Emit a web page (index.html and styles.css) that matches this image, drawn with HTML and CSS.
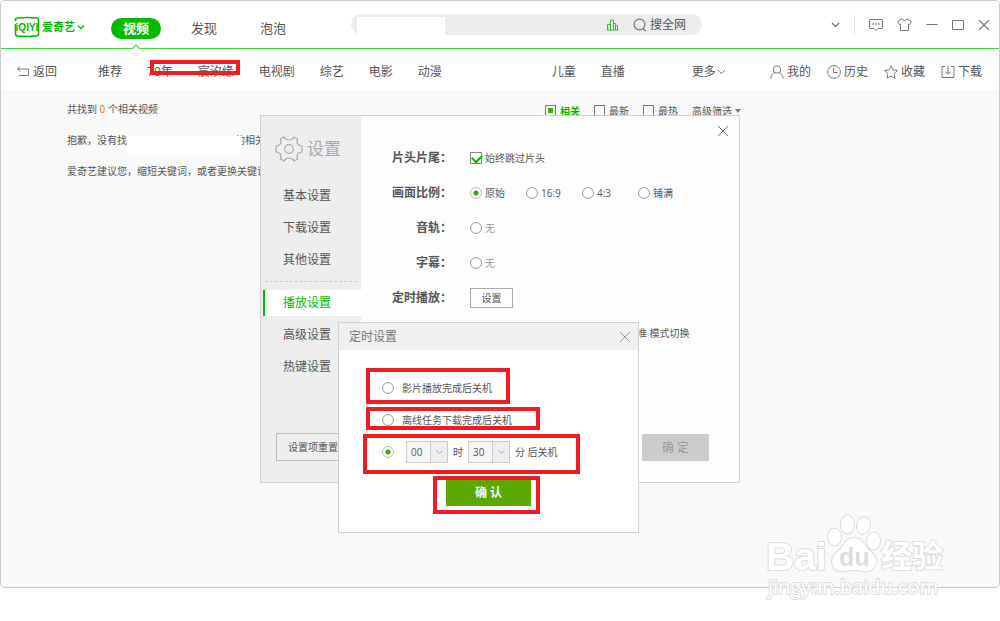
FILE: index.html
```
<!DOCTYPE html>
<html lang="zh-CN">
<head>
    <meta charset="UTF-8">
    <meta name="viewport" content="width=device-width, initial-scale=1.0">
    <title>爱奇艺</title>
    <link rel="stylesheet" href="styles.css">
</head>
<body>
    <div class="window">
        <header class="topbar">
            <a class="logo" href="#">
                <svg width="26" height="22" viewBox="0 0 26 22">
                    <path d="M1.500 5V4Q1.500 2.200 3.500 2Q13 1 22.500 2Q24.500 2.200 24.500 4V18Q24.500 19.800 22.500 20Q13 21 3.500 20Q1.500 19.800 1.500 18V8" fill="none" stroke="#0b0" stroke-width="1.600"/>
                    <text x="13" y="15" text-anchor="middle" class="logo-mark">iQIYI</text>
                </svg>
                <span>爱奇艺</span>
                <svg width="8" height="6" viewBox="0 0 8 6"><path d="M1 1.500L4 4.500L7 1.500" fill="none" stroke="#0b0" stroke-width="1.300"/></svg>
            </a>
            <nav class="tabs">
                <a class="tab active" href="#">视频
                    <svg class="notch" width="12" height="7" viewBox="0 0 12 7"><path d="M0 7V6L6 0L12 6V7Z" fill="#fff"/><path d="M0 5.500H1.500L6 1L10.500 5.500H12" fill="none" stroke="#3d3" stroke-width="1.200"/></svg>
                </a>
                <a class="tab" href="#">发现</a>
                <a class="tab" href="#">泡泡</a>
            </nav>
            <form class="search">
                <input type="text" aria-label="搜索">
                <svg width="12" height="12" viewBox="0 0 12 12" fill="none" stroke="#2cc02c"><path d="M.5 11V5.500H3.500V11M3.500 11V1.500Q5 .2 6.500 1.500V11M6.500 4.500H8.500V11M8.500 6.500H10.500V11M0 11H11.500"/></svg>
                <button type="button">
                    <svg width="14" height="14" viewBox="0 0 14 14" fill="none" stroke="#777" stroke-width="1.200"><circle cx="6.500" cy="6.500" r="5.400"/><path d="M10 10.500L12.500 13"/></svg>
                    搜全网
                </button>
            </form>
            <div class="controls">
                <button aria-label="展开"><svg width="9" height="6" viewBox="0 0 9 6"><path d="M1 1L4.500 4.500L8 1" stroke-width="1.400"/></svg></button>
                <i class="divider"></i>
                <button aria-label="消息"><svg width="14" height="14" viewBox="0 0 14 14"><path d="M.5 1.500H13.500V10.500H9L7 12.500L5 10.500H.5Z"/><path d="M3.500 6H5M6.300 6H7.800M9.200 6H10.700" stroke-width="1.500"/></svg></button>
                <button aria-label="皮肤"><svg width="15" height="14" viewBox="0 0 15 14"><path d="M4.500 1Q7.500 4 10.500 1L14.300 3.600L12.800 6.500L11.500 6V12.500H3.500V6L2.200 6.500L.7 3.600Z"/></svg></button>
                <button aria-label="最小化"><svg width="12" height="14" viewBox="0 0 12 14"><path d="M.5 6.500H11.500"/></svg></button>
                <button aria-label="最大化"><svg width="12" height="12" viewBox="0 0 12 12"><path d="M.5 1.500H11.500V10.500H.5Z"/></svg></button>
                <button aria-label="关闭"><svg width="12" height="12" viewBox="0 0 12 12"><path d="M1 1L11 11M11 1L1 11" stroke-width="1.200"/></svg></button>
            </div>
        </header>

        <nav class="channels">
            <a class="back" href="#"><svg width="14" height="14" viewBox="0 0 14 14"><path d="M4 1.500L1.500 4L4 6.500M1.500 4H12.500V10.500H3"/></svg>返回</a>
            <div class="channel-list">
                <a href="#">推荐</a>
                <a href="#">70年</a>
                <a href="#">宸汐缘</a>
                <a href="#">电视剧</a>
                <a href="#">综艺</a>
                <a href="#">电影</a>
                <a href="#">动漫</a>
                <span class="channel-blank"></span>
                <a href="#">儿童</a>
                <a href="#">直播</a>
            </div>
            <a class="more" href="#">更多<svg width="9" height="6" viewBox="0 0 9 6"><path d="M1 1L4.500 4.500L8 1"/></svg></a>
            <div class="user-links">
                <a href="#"><svg width="14" height="14" viewBox="0 0 14 14"><circle cx="7" cy="4.500" r="3.700"/><path d="M.8 13.500Q1.500 8.500 5 7.700M9 7.700Q12.500 8.500 13.200 13.500"/></svg>我的</a>
                <a href="#"><svg width="14" height="14" viewBox="0 0 14 14"><circle cx="7" cy="7" r="6.400"/><path d="M6.500 3V7.500H10.500"/></svg>历史</a>
                <a href="#"><svg width="14" height="14" viewBox="0 0 14 14"><path d="M7 .8L9 4.900L13.500 5.500L10.200 8.600L11 13.200L7 11L3 13.200L3.800 8.600L.5 5.500L5 4.900Z"/></svg>收藏</a>
                <a href="#"><svg width="14" height="14" viewBox="0 0 14 14"><path d="M4 1.500H1V12.500H13V1.500H10M7 1V9M4.300 6.500L7 9.200L9.700 6.500"/></svg>下载</a>
            </div>
            <div class="mark mark-channels"></div>
        </nav>

        <main class="results">
            <div class="results-head">
                <p>共找到 <em>0</em> 个相关视频</p>
                <div class="filters">
                    <label><input type="radio" name="sort" checked>相关</label>
                    <label><input type="radio" name="sort">最新</label>
                    <label><input type="radio" name="sort">最热</label>
                    <a href="#">高级筛选<i class="arrow"></i></a>
                </div>
            </div>
            <p>抱歉，没有找<span class="keyword"></span>的相关视频</p>
            <p>爱奇艺建议您，缩短关键词，或者更换关键词</p>
        </main>

        <section class="settings" role="dialog" aria-label="设置">
            <aside class="side">
                <h2>
                    <svg width="28" height="28" viewBox="0 0 28 28" fill="none" stroke="#aaa" stroke-width="1.200">
                        <path d="M9 2Q10.500 5 14 5Q17.500 5 19 2L22.500 4Q21.300 7.300 23 9.300Q24.300 10.800 27 11V17Q24.300 17.200 23 18.700Q21.300 20.700 22.500 24L19 26Q17.500 23 14 23Q10.500 23 9 26L5.500 24Q6.700 20.700 5 18.700Q3.700 17.200 1 17V11Q3.700 10.800 5 9.300Q6.700 7.300 5.500 4Z" stroke-linejoin="round"/>
                        <circle cx="14" cy="14" r="4.300"/>
                    </svg>
                    设置
                </h2>
                <nav class="side-nav">
                    <a href="#">基本设置</a>
                    <a href="#">下载设置</a>
                    <a href="#">其他设置</a>
                    <hr>
                    <a class="active" href="#">播放设置</a>
                    <a href="#">高级设置</a>
                    <a href="#">热键设置</a>
                </nav>
                <button class="reset">设置项重置</button>
            </aside>
            <div class="panel">
                <button class="close" aria-label="关闭设置"><svg width="12" height="12" viewBox="0 0 12 12"><path d="M1 1L11 11M11 1L1 11"/></svg></button>
                <div class="row">
                    <span class="name">片头片尾：</span>
                    <label><input type="checkbox" checked>始终跳过片头</label>
                </div>
                <div class="row">
                    <span class="name">画面比例：</span>
                    <div class="ratios">
                        <label><input type="radio" name="ratio" checked>原始</label>
                        <label><input type="radio" name="ratio">16:9</label>
                        <label><input type="radio" name="ratio">4:3</label>
                        <label><input type="radio" name="ratio">铺满</label>
                    </div>
                </div>
                <div class="row muted">
                    <span class="name">音轨：</span>
                    <label><input type="radio" name="audio">无</label>
                </div>
                <div class="row muted">
                    <span class="name">字幕：</span>
                    <label><input type="radio" name="subtitle">无</label>
                </div>
                <div class="row">
                    <span class="name">定时播放：</span>
                    <button class="outline">设置</button>
                </div>
                <div class="row mode">标准 模式切换</div>
                <button class="ok" disabled>确 定</button>
            </div>

            <form class="timer" role="dialog" aria-label="定时设置">
                <header>
                    <h3>定时设置</h3>
                    <button type="button" class="close" aria-label="关闭定时设置"><svg width="12" height="12" viewBox="0 0 12 12"><path d="M1 1L11 11M11 1L1 11"/></svg></button>
                </header>
                <div class="options">
                    <label class="option"><input type="radio" name="timer">影片播放完成后关机</label>
                    <label class="option"><input type="radio" name="timer">离线任务下载完成后关机</label>
                    <div class="option">
                        <input type="radio" name="timer" aria-label="按时间关机" checked>
                        <span class="select"><select aria-label="小时"><option>00</option><option>01</option></select><svg width="7" height="5" viewBox="0 0 7 5"><path d="M.5 .5L3.500 3.500L6.500 .5"/></svg></span>
                        <span>时</span>
                        <span class="select"><select aria-label="分钟"><option>30</option><option>45</option></select><svg width="7" height="5" viewBox="0 0 7 5"><path d="M.5 .5L3.500 3.500L6.500 .5"/></svg></span>
                        <span>分 后关机</span>
                    </div>
                </div>
                <button type="button" class="confirm">确 认</button>
                <div class="mark mark-movie"></div>
                <div class="mark mark-offline"></div>
                <div class="mark mark-time"></div>
                <div class="mark mark-confirm"></div>
            </form>
        </section>
    </div>

    <svg class="watermark" width="190" height="92" viewBox="0 0 190 92">
        <ellipse cx="74.500" cy="25" rx="6.500" ry="8.500"/>
        <ellipse cx="87.500" cy="12.500" rx="6.500" ry="9"/>
        <ellipse cx="103.500" cy="13.500" rx="6.500" ry="8.500" transform="rotate(12 103.500 13.500)"/>
        <ellipse cx="113.500" cy="29" rx="6.500" ry="8.500"/>
        <path d="M94 26Q88 26 84 32Q81 37 76 41Q70 47 73 54Q77 61 86 59Q94 57 102 59Q111 61 115 54Q119 47 112 41Q107 37 104 32Q100 26 94 26Z"/>
        <text class="wm-latin" x="6" y="58">Bai</text>
        <text class="wm-du" x="79" y="54">du</text>
        <text class="wm-cjk" x="121" y="55">经验</text>
        <text class="wm-url" x="8" y="82">jingyan.baidu.com</text>
    </svg>
</body>
</html>
```

FILE: styles.css
```
* {
    box-sizing: border-box;
}

body {
    font-family: "Open Sans", "Noto Sans CJK SC", sans-serif;
    font-size: 10px;
    line-height: 16px;
    color: #555;
    background-color: #fff;
    margin: 0;
    padding-bottom: 33px;
    min-height: 100vh;
    display: flex;
    position: relative;
}

a {
    color: inherit;
    text-decoration: none;
}

p, h2, h3 {
    margin: 0;
    font-weight: normal;
}

button, input, select {
    font: inherit;
    color: inherit;
    margin: 0;
}

button {
    background: none;
    border: none;
    padding: 0;
    cursor: pointer;
}

svg {
    display: block;
    flex: none;
}

label {
    display: flex;
    align-items: center;
    gap: 3px;
}

.window {
    flex: 1;
    display: flex;
    flex-direction: column;
    position: relative;
    background-color: #f9f9f9;
    border: 1px solid #ccc;
    border-radius: 4px;
}

/* top bar */
.topbar {
    display: flex;
    align-items: center;
    height: 48px;
    padding: 0 9px 0 13px;
    background-color: #fff;
    border-bottom: 1px solid #3d3;
    border-radius: 4px 4px 0 0;
}

.logo {
    display: flex;
    align-items: center;
    gap: 2px;
    width: 97px;
    height: 40px;
    margin-top: 4px;
    color: #0b0;
    font-size: 11px;
    font-weight: bold;
}

.logo-mark {
    font: bold 10px "Liberation Sans", sans-serif;
    fill: #0b0;
}

.tabs {
    display: flex;
    gap: 17px;
    font-size: 13px;
}

.tab {
    position: relative;
    width: 52px;
    line-height: 21px;
    text-align: center;
    margin-top: 7px;
}

.tab.active {
    width: 50px;
    color: #fff;
    font-weight: bold;
    background-color: #0b0;
    border-radius: 11px;
}

.notch {
    position: absolute;
    left: 19px;
    top: 26px;
}

.search {
    display: flex;
    align-items: center;
    flex: 0 1 351px;
    height: 21px;
    margin-left: 52px;
    padding: 0 16px 0 6px;
    background-color: #ececec;
    border-radius: 11px;
}

.search input {
    width: 88px;
    height: 18px;
    margin: 3px auto 0 0;
    padding: 0 4px;
    border: none;
    background-color: #fff;
}

.search button {
    display: flex;
    align-items: center;
    gap: 3px;
    margin-left: 14px;
    font-size: 12px;
}

.controls {
    display: flex;
    align-items: center;
    gap: 14px;
    margin-left: auto;
}

.controls svg,
.channels svg,
.close svg,
.select svg {
    fill: none;
    stroke: #777;
}

.divider {
    width: 1px;
    height: 20px;
    background-color: #e4e4e4;
}

/* channel bar */
.channels {
    display: flex;
    align-items: center;
    position: relative;
    height: 41px;
    padding: 4px 17px 0 15px;
    background-color: #fff;
    font-size: 12px;
}

.channels a {
    display: flex;
    align-items: center;
    gap: 3px;
}

.channels .back {
    width: 82px;
}

.channel-list {
    display: flex;
    gap: 25px;
}

.channel-blank {
    width: 60px;
}

.channels .more {
    margin-left: 67px;
    gap: 1px;
}

.user-links {
    display: flex;
    gap: 16px;
    margin-left: auto;
}

/* results */
.results {
    display: flex;
    flex-direction: column;
    gap: 15px;
    padding: 11px 258px 0 66px;
}

.results-head {
    display: flex;
    justify-content: space-between;
    height: 16px;
}

.results em {
    color: #f60;
    font-style: normal;
}

.keyword {
    display: inline-block;
    width: 108px;
    position: relative;
}

.keyword::after {
    content: "";
    position: absolute;
    left: 0;
    top: -8px;
    width: 115px;
    height: 19px;
    background-color: #fff;
}

.filters {
    display: flex;
    align-items: center;
    gap: 14px;
    padding-top: 3px;
}

.filters label {
    gap: 4px;
}

.filters label:has(:checked) {
    color: #0b0;
    font-weight: bold;
}

.filters a {
    display: flex;
    align-items: center;
    gap: 3px;
}

.filters input {
    appearance: none;
    width: 11px;
    height: 11px;
    border: 1px solid #777;
}

.filters input:checked {
    border-color: #4a0;
    background-color: #4a0;
    box-shadow: inset 0 0 0 2px #fff;
}

.arrow {
    border: 3px solid transparent;
    border-top: 4px solid #777;
    border-bottom: 0;
}

/* settings dialog */
.settings {
    display: flex;
    position: absolute;
    top: 114px;
    left: 50%;
    width: 480px;
    margin-left: -240px;
    background-color: #fdfdfd;
    border: 1px solid #d0d0d0;
}

.side {
    display: flex;
    flex-direction: column;
    width: 100px;
    padding: 19px 0 21px;
    background-color: #eee;
}

.side h2 {
    display: flex;
    align-items: center;
    gap: 4px;
    padding-left: 14px;
    line-height: 28px;
    font-size: 17px;
    color: #aaa;
}

.side-nav {
    display: flex;
    flex-direction: column;
    gap: 6px;
    padding: 20px 0 53px 2px;
    font-size: 12px;
}

.side-nav a {
    padding-left: 18px;
    line-height: 26px;
    border-left: 2px solid transparent;
}

.side-nav a.active {
    color: #0b0;
    background-color: #fff;
    border-color: #0b0;
}

.side-nav hr {
    width: 92px;
    margin: 2px 0 2px 2px;
    border: none;
    border-top: 1px dashed #ccc;
}

.reset {
    width: 74px;
    height: 28px;
    margin-left: 15px;
    border: 1px solid #bbb;
}

.panel {
    flex: 1;
    display: flex;
    flex-direction: column;
    position: relative;
    padding: 24px 30px 21px 20px;
}

.panel .close {
    position: absolute;
    top: 9px;
    right: 10px;
}

.row {
    display: flex;
    align-items: center;
    gap: 18px;
    height: 35px;
}

.name {
    width: 71px;
    text-align: right;
    font-size: 12px;
    font-weight: bold;
    white-space: nowrap;
}

.muted label {
    color: #999;
}

.ratios {
    display: grid;
    grid-template-columns: repeat(4, 56px);
}

.mode {
    padding-left: 246px;
}

.outline {
    width: 43px;
    height: 20px;
    border: 1px solid #aaa;
}

.ok {
    align-self: flex-end;
    width: 67px;
    height: 27px;
    margin-top: auto;
    background-color: #ccc;
    color: #999;
    font-size: 12px;
}

.settings input[type="radio"] {
    appearance: none;
    width: 12px;
    height: 12px;
    border: 1px solid #999;
    border-radius: 50%;
    background-color: #fff;
}

.settings input[type="radio"]:checked {
    border-color: #bbb;
    background: radial-gradient(circle, #3a0 0 2px, #fff 3px);
}

.settings input[type="checkbox"] {
    appearance: none;
    position: relative;
    width: 12px;
    height: 12px;
    border: 1px solid #888;
    background-color: #fff;
}

.settings input[type="checkbox"]:checked::after {
    content: "";
    position: absolute;
    left: 1px;
    top: 1px;
    width: 8px;
    height: 5px;
    border: solid #0b0;
    border-width: 0 0 2px 2px;
    transform: rotate(-45deg);
}

/* timer dialog */
.timer {
    position: absolute;
    top: 206px;
    left: 77px;
    width: 301px;
    padding-bottom: 26px;
    background-color: #fff;
    border: 1px solid #d0d0d0;
}

.timer header {
    display: flex;
    align-items: center;
    justify-content: space-between;
    height: 27px;
    padding: 0 7px 0 10px;
    background-color: #f0f0f0;
}

.timer h3 {
    font-size: 12px;
    color: #777;
}

.timer .close svg {
    stroke: #999;
}

.options {
    padding: 22px 43px 0;
}

.option {
    display: flex;
    align-items: center;
    gap: 5px;
    height: 32px;
}

label.option {
    gap: 8px;
}

.select {
    display: flex;
    align-items: center;
    position: relative;
}

.option input + .select {
    margin-left: 7px;
}

.select select {
    appearance: none;
    width: 42px;
    height: 22px;
    padding: 0 0 0 4px;
    border: 1px solid #ccc;
    border-radius: 0;
    background: linear-gradient(90deg, #f5f5f5 23px, #ccc 23px 24px, #eee 24px);
}

.select svg {
    position: absolute;
    right: 5px;
    stroke: #aaa;
    pointer-events: none;
}

.confirm {
    display: block;
    width: 85px;
    height: 26px;
    margin: 12px auto 0;
    background-color: #5aa800;
    color: #fff;
    font-size: 12px;
    font-weight: bold;
}

/* red callout frames */
.mark {
    position: absolute;
    border: 4px solid #ee1c25;
    pointer-events: none;
}

.mark-channels {
    left: 149px;
    top: 11px;
    width: 90px;
    height: 15px;
}

.mark-movie {
    left: 27px;
    top: 45px;
    width: 144px;
    height: 36px;
}

.mark-offline {
    left: 27px;
    top: 84px;
    width: 174px;
    height: 23px;
}

.mark-time {
    left: 24px;
    top: 111px;
    width: 217px;
    height: 40px;
}

.mark-confirm {
    left: 94px;
    top: 153px;
    width: 107px;
    height: 38px;
}

/* watermark */
.watermark {
    position: absolute;
    right: 50px;
    bottom: 17px;
    fill: #fff;
    stroke: #ddd;
    stroke-width: 2px;
    paint-order: stroke;
    pointer-events: none;
}

.wm-latin {
    font: bold 39px "Liberation Sans", sans-serif;
}

.wm-du {
    font: bold 25px "Liberation Sans", sans-serif;
    fill: #ddd;
    stroke: none;
}

.wm-cjk {
    font: bold 31px "Noto Sans CJK SC", sans-serif;
}

.wm-url {
    font: 20px "Open Sans", sans-serif;
}
```
